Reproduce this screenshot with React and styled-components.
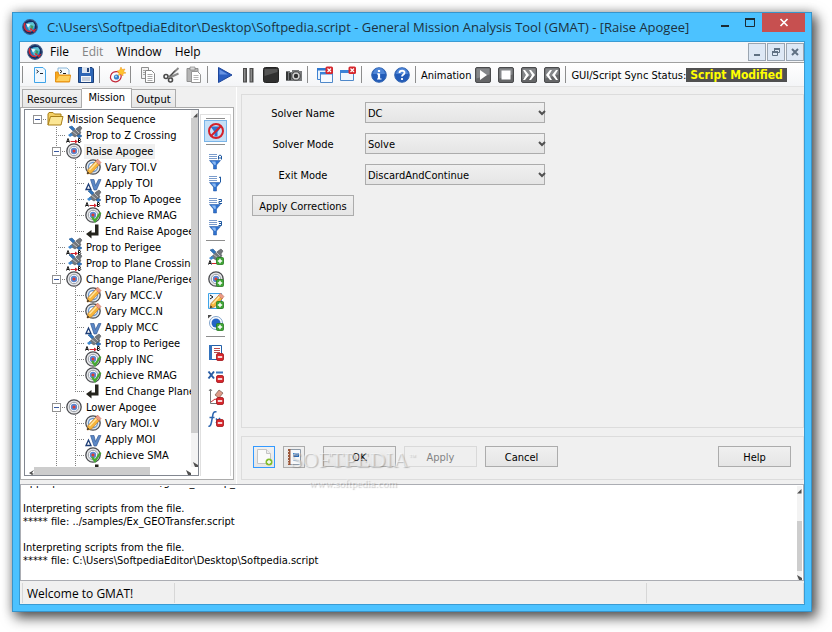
import { useEffect, useRef, useState } from 'react';
import styled, { createGlobalStyle, css } from 'styled-components';

const GlobalStyle = createGlobalStyle`
    * {
        box-sizing: border-box;
    }
    body {
        margin: 0;
        background: #ffffff;
    }
    button, select, textarea {
        font: inherit;
        color: inherit;
    }
`

const uiFont = css`
    font-family: "DejaVu Sans Condensed", "Noto Sans", sans-serif;
    font-size: 11px;
    line-height: 13px;
`

const shellFont = css`
    font-family: "Open Sans", "Noto Sans", sans-serif;
    font-size: 12px;
    line-height: 16px;
`

const Page = styled.div`
    ${uiFont}
    height: 100vh;
    min-height: 480px;
    padding: 12px 20px 20px 12px;
    color: #000000;
`

const Window = styled.div`
    display: flex;
    flex-direction: column;
    height: 100%;
    padding: 0 6px 6px;
    border: 1px solid #3794cb;
    background: #4cc2ff;
    box-shadow: 4px 5px 12px 1px rgba(0, 0, 0, 0.65), 0 0 10px rgba(0, 0, 0, 0.2);
`

const TitleBar = styled.header`
    display: flex;
    height: 28px;
    flex: none;
    padding-left: 3px;
    align-items: center;
    gap: 9px;
`

const Title = styled.h1`
    flex: 1;
    min-width: 0;
    margin: 0;
    overflow: hidden;
    white-space: nowrap;
    font-family: "Open Sans", "Noto Sans", sans-serif;
    font-size: 13px;
    font-weight: 400;
    line-height: 20px;
    color: #1c3140;
`

const Caption = styled.div`
    display: flex;
    align-self: flex-start;
`

const CaptionButton = styled.button`
    display: grid;
    place-items: center;
    width: ${props => props.$close ? "43px" : "25px"};
    height: 19px;
    padding: 0;
    border: none;
    background: ${props => props.$close ? "#c75050" : "transparent"};
`

const Client = styled.div`
    display: flex;
    flex: 1;
    flex-direction: column;
    min-height: 0;
    border: 1px solid #3a9bd3;
    background: #f0f0f0;
`

const MenuBar = styled.nav`
    ${shellFont}
    display: flex;
    flex: none;
    align-items: center;
    height: 20px;
    padding-left: 7px;
    background: #f5f6f8;
`

const MenuItem = styled.button`
    padding: 0 6px 0 7px;
    border: none;
    background: transparent;
    color: ${props => props.disabled ? "#838485" : "#000000"};
`

const MdiButtons = styled.div`
    display: flex;
    gap: 1px;
    margin-left: auto;
`

const MdiButton = styled.button`
    display: grid;
    place-items: center;
    width: 18px;
    height: 18px;
    padding: 0;
    border: 1px solid #9aa5b1;
    background: #dde8f5;
`

const Toolbar = styled.div`
    display: flex;
    flex: none;
    align-items: center;
    height: 25px;
    border-top: 1px solid #a0a0a0;
    border-bottom: 1px solid #e3e3e3;
    background: linear-gradient(#ffffff, #f4f5f7);
    white-space: nowrap;
`

const ToolSeparator = styled.span`
    flex: none;
    width: 8px;
    height: 17px;
    background: linear-gradient(#8d8d8d, #8d8d8d) 2px 0 / 1px 100% no-repeat;
`

const ToolButton = styled.button`
    display: grid;
    flex: none;
    place-items: center;
    width: 23px;
    height: 22px;
    padding: 0;
    border: none;
    background: transparent;
`

const ToolLabel = styled.span`
    padding-top: 2px;
`

const SyncStatus = styled.strong`
    padding: 0 4px;
    background: #505050;
    color: #ffff00;
    font-size: 12px;
    line-height: 14px;
`

const Workspace = styled.div`
    display: flex;
    flex: 1;
    min-height: 0;
`

const SidePane = styled.aside`
    display: flex;
    flex: none;
    flex-direction: column;
    width: 217px;
    padding: 1px 2px 4px 0;
    border-right: 1px solid #ffffff;
`

const TabList = styled.div`
    display: flex;
    align-items: flex-end;
    height: 19px;
    padding-left: 2px;
`

const Tab = styled.button`
    position: relative;
    height: ${props => props.$active ? "20px" : "18px"};
    margin-bottom: ${props => props.$active ? "-1px" : "0"};
    padding: ${props => props.$active ? "0 6px 2px" : "2px 4px 0"};
    border: 1px solid #acacac;
    border-left-width: ${props => props.$first ? "1px" : "0"};
    border-bottom: none;
    background: ${props => props.$active ? "#ffffff" : "linear-gradient(#f1f1f1, #e6e6e6)"};
`

const TabPage = styled.div`
    display: flex;
    flex: 1;
    min-height: 0;
    padding: 1px 0 3px 3px;
    border: 1px solid #acacac;
    background: #ffffff;
`

const TreeFrame = styled.div`
    display: grid;
    flex: 1;
    grid-template: minmax(0, 1fr) 8px / minmax(0, 1fr) 7px;
    border: 1px solid #828790;
`

const TreeList = styled.ul`
    margin: 0;
    padding: 1px 0 0 3px;
    overflow: hidden;
    list-style: none;
`

const TreeRow = styled.li`
    display: flex;
    height: 16px;
    align-items: center;
    white-space: nowrap;
`

const dots = "repeating-linear-gradient(#808080 0 1px, transparent 1px 2px)";
const dotsAcross = "repeating-linear-gradient(90deg, #808080 0 1px, transparent 1px 2px)";

const guideShapes = {
    blank: "none",
    line: `${dots} 9px 0 / 1px 16px no-repeat`,
    tee: `${dots} 9px 0 / 1px 16px no-repeat, ${dotsAcross} 9px 8px / 10px 1px no-repeat`,
    end: `${dots} 9px 0 / 1px 9px no-repeat, ${dotsAcross} 9px 8px / 10px 1px no-repeat`,
    root: `${dotsAcross} 9px 8px / 10px 1px no-repeat`,
};

const Guide = styled.span`
    display: grid;
    flex: none;
    place-items: center;
    width: 19px;
    height: 16px;
    background: ${props => guideShapes[props.$shape]};
`

const Expander = styled.button`
    display: grid;
    place-items: center;
    width: 9px;
    height: 9px;
    padding: 0;
    border: 1px solid #919191;
    background: #ffffff;
`

const TreeText = styled.span`
    margin-left: 2px;
    padding: 1px 2px;
    background: ${props => props.$selected ? "#f0f0f0" : "transparent"};
`

const Scrollbar = styled.div`
    display: flex;
    flex-direction: ${props => props.$across ? "row" : "column"};
    justify-content: space-between;
    align-items: flex-end;
    padding: ${props => props.$across ? "0 0 0 4px" : "3px 0 0"};
    background: ${props => props.$across ? "#ffffff" : "#f3f3f3"};
`

const Thumb = styled.span`
    flex: none;
    align-self: stretch;
    ${props => props.$across ? "width" : "height"}: ${props => props.$size};
    ${props => props.$across ? "margin-right" : "margin-bottom"}: auto;
    ${props => props.$push && "margin-top: auto; margin-bottom: 4px;"}
    background: #cdcdcd;
`

const FilterStrip = styled.div`
    display: flex;
    flex: none;
    flex-direction: column;
    align-items: center;
    width: 31px;
    margin: 5px 2px 0 1px;
    padding-top: 3px;
    border: 1px solid #e0e0e0;
    border-bottom: none;
`

const StripLine = styled.span`
    flex: none;
    width: 19px;
    height: 1px;
    margin: ${props => props.$tight ? "0 0 1px" : "2px 0 5px"};
    background: #8d8d8d;
`

const StripButton = styled.button`
    display: grid;
    flex: none;
    place-items: center;
    width: 23px;
    height: 22px;
    padding: 0;
    border: ${props => props.$pressed ? "1px solid #7ab5e8" : "none"};
    background: ${props => props.$pressed ? "#c5e0f7" : "transparent"};
`

const Detail = styled.main`
    position: relative;
    display: flex;
    flex: 1;
    flex-direction: column;
    gap: 8px;
    min-width: 0;
    padding: 7px 0 4px 4px;
`

const SolverPanel = styled.section`
    display: grid;
    flex: 1;
    grid-template-columns: 102px 180px;
    grid-auto-rows: 21px;
    gap: 10px 11px;
    padding: 7px 10px;
    border: 1px solid #dcdcdc;
`

const FieldLabel = styled.label`
    align-self: center;
    padding-top: 2px;
    text-align: center;
`

const SelectBox = styled.div`
    display: grid;
    align-items: center;

    > * {
        grid-area: 1 / 1;
    }
    > svg {
        justify-self: end;
        pointer-events: none;
    }
`

const Select = styled.select`
    width: 100%;
    height: 21px;
    padding: 2px 2px 0;
    border: 1px solid #acacac;
    border-radius: 0;
    background: linear-gradient(#f0f0f0, #e5e5e5);
    appearance: none;
`

const PushButton = styled.button`
    display: grid;
    place-items: center;
    width: ${props => props.$square ? "22px" : props.$fill ? "100%" : "73px"};
    height: ${props => props.$square ? "22px" : "21px"};
    padding: ${props => props.$square ? "0" : "2px 0 0"};
    border: 1px solid ${props => props.$focused ? "#3399ff" : props.disabled ? "#d9d9d9" : "#acacac"};
    background: ${props => props.disabled ? "#efefef" : "linear-gradient(#f0f0f0, #e5e5e5)"};
    color: ${props => props.disabled ? "#838383" : "#000000"};
`

const Actions = styled.footer`
    display: flex;
    flex: none;
    gap: 8px;
    height: 44px;
    padding: 9px 12px 9px 11px;
    border: 1px solid #dcdcdc;
`

const Push = styled.span`
    width: ${props => props.$wide ? "auto" : "2px"};
    flex: ${props => props.$wide ? "1" : "none"};
`

const Watermark = styled.div`
    position: absolute;
    left: 53px;
    bottom: -9px;
    width: 126px;
    text-align: center;
    color: rgba(255, 255, 255, 0.5);
    text-shadow: 1px 1px 1px rgba(100, 100, 100, 0.4);
    font-family: "Liberation Serif", serif;
    font-size: 22px;
    line-height: 26px;
    white-space: nowrap;
    pointer-events: none;

    sup {
        font-size: 7px;
        line-height: 0;
    }
    small {
        display: block;
        font-size: 11px;
        line-height: 20px;
    }
`

const Messages = styled.section`
    display: flex;
    flex: none;
    height: 97px;
    padding: 1px 1px 0;
    border: 1px solid #abadb3;
    background: #ffffff;
`

const MessageText = styled.textarea`
    flex: 1;
    height: 94px;
    padding: 0 1px;
    border: none;
    outline: none;
    resize: none;
    overflow: hidden;
    background: transparent;
`

const StatusBar = styled.footer`
    ${shellFont}
    display: flex;
    flex: none;
    height: 23px;
    padding: 2px 0 1px 2px;
`

const StatusCell = styled.span`
    flex: ${props => props.$size};
    padding: 3px 4px 1px;
    border-right: 1px solid #d7d7d7;
    border-left: ${props => props.$first ? "1px solid #d7d7d7" : "none"};
`

const Svg = styled.svg`
    display: block;
    flex: none;
    overflow: visible;
`

const target = (
    <>
        <circle cx="8" cy="8" r="7.2" fill="#e6e7ea" stroke="#4b4c50" strokeWidth="1.3" />
        <circle cx="8" cy="8" r="4.7" fill="#fff" stroke="#9a9ea4" strokeWidth="1" />
        <circle cx="8" cy="8" r="3.2" fill="#5b86cf" />
        <circle cx="8" cy="8" r="1.5" fill="#e13a33" />
    </>
)

const craft = (
    <>
        <path d="M2 1l3-1 3 3-2 2zM9 9l2-2 4 3-3 2z" fill="#2f74bd" stroke="#1b4c84" strokeWidth=".5" />
        <path d="M3 8l7-6 3-2 2 2-2 3 1 2-6 4z" fill="#73777c" stroke="#47494c" strokeWidth=".5" />
        <path d="M5 5l5 4M8 3l4 4" stroke="#b9bdc2" />
        <path d="M1 9l3-2 2 2-3 2z" fill="#3b86cf" />
    </>
)

const plus = (
    <>
        <rect x="8.5" y="8.5" width="7" height="7" rx="1" fill="#3fa535" stroke="#26781f" strokeWidth=".8" />
        <path d="M12 9.8v4.4M9.8 12h4.4" stroke="#fff" strokeWidth="1.4" />
    </>
)

const minus = (
    <>
        <rect x="8.5" y="8.5" width="7" height="7" rx="1.5" fill="#d8262c" stroke="#a01318" strokeWidth=".8" />
        <path d="M9.8 12h4.4" stroke="#fff" strokeWidth="1.6" />
    </>
)

const pencil = (
    <>
        <path d="M2 15l1-4.500 8-8.500 3.500 3.500-8 8.500z" fill="#f7b63c" stroke="#b8762a" strokeWidth=".7" />
        <path d="M10.500 2.500L14 6l2-2.500L12.500 0z" fill="#eb9a86" stroke="#b8664f" strokeWidth=".5" />
        <path d="M2 15l.7-2.500 1.800 1.800z" fill="#222" />
        <path d="M4.500 11l7-7.500" stroke="#ffe7a8" strokeWidth="1.300" />
    </>
)

const filter = (
    <>
        <path d="M1 1.500h8M1 3.500h8M1 5.500h8" stroke="#7b9ccc" />
        <path d="M1.500 7.500h11l-4 4.500v4h-3v-4z" fill="#2f72cf" stroke="#184f9f" strokeWidth=".5" />
        <path d="M3.500 8.500h4l.5 3-1.500.5z" fill="#8dbaf2" />
    </>
)

const closeBadge = (
    <>
        <rect x="8.500" y="-.5" width="7.500" height="7.500" rx="1.500" fill="#d5272d" />
        <path d="M10.500 1.500L14 5M14 1.500L10.500 5" stroke="#fff" strokeWidth="1.200" />
    </>
)

const darkTile = (
    <>
        <rect x=".5" y=".5" width="15" height="15" rx="1.500" fill="#656668" stroke="#4a4b4d" />
        <path d="M1.500 1.500h13v6l-13 4z" fill="#85878a" />
    </>
)

const drawings = {
    gmat: <>
        <circle cx="8" cy="8" r="7.300" fill="#122a5c" stroke="#3f5a86" strokeWidth="1.200" />
        <circle cx="8" cy="8" r="5" fill="#267fc0" />
        <path d="M6 4l5-1 2 3-3 6-3-1-2-4z" fill="#5fc4d2" />
        <path d="M4 4.500l4.500 1L6 8.500z" fill="#eef7f9" />
        <path d="M8.500 6l3 1-1 3.500-2-1z" fill="#3c9a66" />
        <path d="M3 4C1 9 4 13 9 12.500M8 9.500l4 3 1.500-2.500" fill="none" stroke="#dd2632" strokeWidth="1.400" />
    </>,
    folder: <>
        <path d="M1 14V3l1-1.500h4L7.500 3H14v3" fill="#f3cf64" stroke="#a87e17" />
        <path d="M1 14L3.500 5.500H16L14 14z" fill="#fbe694" stroke="#a87e17" />
    </>,
    prop: <>
        <g transform="translate(1 -1)">{craft}</g>
        <path d="M.5 15.500l1.500-4 1.500 4M1 14.500h2M12.500 11.500v4h1.500q1.500-1 0-2h-1.500M12.500 11.500H14q1 1 0 2" fill="none" stroke="#111" />
        <path d="M4.500 14.500h6" stroke="#d4212b" />
        <path d="M9 12.500l3 2-3 2z" fill="#d4212b" />
    </>,
    target,
    vary: <>
        <circle cx="8" cy="8" r="7.200" fill="#e2e8ee" stroke="#4b4c50" strokeWidth="1.300" />
        <circle cx="8" cy="8" r="4.500" fill="#fff" stroke="#6d97c8" strokeWidth="1.300" />
        {pencil}
    </>,
    apply: <>
        <path d="M1 14.500L3.500 9 6 14.500z" fill="#fff" stroke="#1d3d76" strokeWidth="1.300" />
        <path d="M5.500 4.500h3.500l1.500 6 3-6H16L11.500 15H9z" fill="#5b87c5" stroke="#284f8d" strokeWidth=".6" />
    </>,
    achieve: <>
        {target}
        <path d="M7 10l3 4L15.500 5.500" fill="none" stroke="#45a933" strokeWidth="2.300" />
    </>,
    end: <path d="M10 1.500h3.500V12.500H6.500v3L1 11l5.500-4v2.500H10z" fill="#24231c" />,
    newScript: <>
        <path d="M2.500 .5h8.500l2.500 2.500v12.500h-11z" fill="#eff8ff" stroke="#3fa4e8" />
        <path d="M4.500 3l2 1.500-2 1.500M8 6.500h3" fill="none" stroke="#1d2530" />
    </>,
    openScript: <>
        <path d="M3 1h9l2 2v6H3z" fill="#f4fbff" stroke="#8ab6d8" />
        <path d="M5 3l2 1.500L5 6M8 6.500h3" fill="none" stroke="#222" />
        <path d="M.5 15V5H3l1 3h11.500l-1 7z" fill="#f7a81d" stroke="#e3921a" />
        <path d="M1 14l3-5h11l-1 5z" fill="#ffd05e" />
    </>,
    save: <>
        <path d="M.5.5h13.500l1.500 1.500v13.500H.5z" fill="#2e66b5" stroke="#1b3f78" />
        <path d="M4 0h8v6H4z" fill="#dce5f0" /><path d="M9 1h2v4H9z" fill="#23447a" />
        <path d="M3 9h10v6H3z" fill="#f5f7fa" /><path d="M4 11h8M4 13h8" stroke="#97a6bb" />
    </>,
    run: <>
        <ellipse cx="6.500" cy="9.500" rx="5.500" ry="5" fill="none" stroke="#c32536" strokeWidth="1.200" transform="rotate(-30 7 9)" />
        <circle cx="7.500" cy="10" r="2.600" fill="#357fc9" /><circle cx="7" cy="9.500" r="1.100" fill="#9ed3ee" />
        <path d="M12 0l1 2.500L16 2l-1.500 2.500L17 6l-3 .5L14 9l-2-2-2.500 1.500L10 6 8 4l2.500-.5z" fill="#ffc22e" stroke="#ef9415" strokeWidth=".5" />
    </>,
    copy: <>
        <path d="M1.500.5h7v11h-7z" fill="#f3f3f3" stroke="#8f8f8f" />
        <path d="M5.500 3.500h6l3 3v9h-9z" fill="#fff" stroke="#858585" />
        <path d="M7.500 7.500h5M7.500 9.500h5M7.500 11.500h5M7.500 13.500h5M3 3.500h2M3 5.500h2M3 7.500h2" stroke="#a8a8a8" />
    </>,
    cut: <>
        <path d="M15.500 1L6 10M8 10l7.500-3.500" stroke="#8a8a8a" strokeWidth="2" />
        <path d="M12 3.500L7 9.500" stroke="#3d3d3d" />
        <circle cx="3" cy="9.500" r="2" fill="none" stroke="#4a4a4a" strokeWidth="1.600" />
        <circle cx="7.500" cy="13" r="2" fill="none" stroke="#4a4a4a" strokeWidth="1.600" />
    </>,
    paste: <>
        <path d="M1 1.500h11v13H1z" fill="#b4b4b4" stroke="#8f8f8f" />
        <path d="M4 0h5v3H4z" fill="#d9d9d9" stroke="#777" strokeWidth=".6" />
        <path d="M5.500 4.500h6l3 3v8h-9z" fill="#fff" stroke="#959595" />
        <path d="M7.500 8.500h5M7.500 10.500h5M7.500 12.500h5" stroke="#b5b5b5" />
    </>,
    play: <><path d="M1.500.5l13.500 7.500-13.500 7.500z" fill="#2b5ec0" stroke="#1d469b" /><path d="M2.500 2.500L11 7.500H2.500z" fill="#6793e3" /></>,
    pause: <><path d="M3 1h4v14.500H3zM9.500 1h4v14.500h-4z" fill="#4b4b4b" /><path d="M4 2h1.500v12.500H4zM10.500 2H12v12.500h-1.500z" fill="#8c8c8c" /></>,
    stop: <><rect x=".5" y=".5" width="15" height="15" rx="2" fill="#303030" stroke="#222" /><path d="M1.500 2h13v3l-13 4z" fill="#555" /></>,
    camera: <>
        <path d="M0 4h4v1h2V3h7v1h3v10H0z" fill="#77797b" />
        <path d="M1 5v8M4 6v7" stroke="#202020" strokeWidth="1.500" />
        <circle cx="10" cy="9" r="4.200" fill="#d5d5d5" stroke="#414141" /><circle cx="10" cy="9" r="2.200" fill="#333" />
    </>,
    closeAll: <>
        <path d="M.5 1.500h10v11H.5z" fill="#e8f2fc" stroke="#3e82d2" /><path d="M0 1h11v2.500H0z" fill="#2f78d1" />
        <path d="M3.500 5.500h12v10h-12z" fill="#f5faff" stroke="#4f88c9" /><path d="M3 5h13v2.500H3z" fill="#3b83d8" />
        {closeBadge}
    </>,
    closeOne: <>
        <path d="M.5 3.500h13v10H.5z" fill="#eff6fd" stroke="#4f88c9" /><path d="M0 3h14v3H0z" fill="#3b83d8" />
        {closeBadge}
    </>,
    info: <>
        <circle cx="8" cy="8" r="7.300" fill="#225bb8" stroke="#3467b3" /><path d="M2 7a6 6 0 0 1 12 0z" fill="#4e85d7" />
        <path d="M8 3v2M8 6.500v5.500" fill="none" stroke="#fff" strokeWidth="2.200" /><path d="M6 7h2M6 12h4.500" stroke="#fff" />
    </>,
    help: <>
        <circle cx="8" cy="8" r="7.300" fill="#225bb8" stroke="#3467b3" /><path d="M2 7a6 6 0 0 1 12 0z" fill="#4e85d7" />
        <path d="M5.500 6c0-3 5.500-3 5 0 0 1.500-2.500 1.500-2.500 3.500M8 11v2" fill="none" stroke="#fff" strokeWidth="1.800" />
    </>,
    animPlay: <>{darkTile}<path d="M5 3l7 5-7 5z" fill="#fff" /></>,
    animStop: <>{darkTile}<rect x="3.500" y="3.500" width="9" height="9" fill="#fff" /></>,
    animFast: <>{darkTile}<path d="M2 3h2l4 5-4 5H2l3-5zM8 3h2l4 5-4 5H8l3-5z" fill="#fff" /></>,
    animBack: <>{darkTile}<path d="M8 3H6L2 8l4 5h2L5 8zM14 3h-2L8 8l4 5h2l-3-5z" fill="#fff" /></>,
    noFilter: <>
        <path d="M2.500 3.500h11L9.500 9v4.500h-3V9z" fill="#3272d0" />
        <circle cx="8" cy="8" r="7" fill="none" stroke="#d3212b" strokeWidth="2" /><path d="M3 13L13 3" stroke="#d3212b" strokeWidth="2" />
    </>,
    filterA: <>{filter}<path d="M10.500 6.500V3q1.500-2 3 0v3.500M10.500 5h3" fill="none" stroke="#1d579f" /></>,
    filter1: <>{filter}<path d="M11 2.500l1.500-.5v5" fill="none" stroke="#1d579f" /></>,
    filter2: <>{filter}<path d="M10.500 2.500h3v2h-2.500v2h3" fill="none" stroke="#1d579f" /></>,
    filter3: <>{filter}<path d="M10.500 2.500h3v4h-3M11 4.500h2" fill="none" stroke="#1d579f" /></>,
    addProp: <>{craft}<path d="M.5 15.500l1.500-4 1.500 4M1 14.500h2" fill="none" stroke="#111" /><path d="M4 14.500h5" stroke="#d4212b" />{plus}</>,
    addTarget: <>{target}{plus}</>,
    addScript: <><path d="M.5.5h13v15H.5z" fill="#eff8ff" stroke="#3fa4e8" /><path d="M2 2l3 2-3 2" fill="none" stroke="#111" />{pencil}{plus}</>,
    addOrbit: <>
        <circle cx="8" cy="8" r="6.500" fill="none" stroke="#7fa3cc" /><circle cx="8" cy="8" r="4.500" fill="#2465c5" />
        <path d="M0 3.500V0h4z" fill="#4c4c4c" />{plus}
    </>,
    report: <>
        <path d="M1.500.5h12v14h-12z" fill="#fff" stroke="#2560a8" /><path d="M1 0h3v15H1z" fill="#3272bd" />
        <path d="M6 3.500h6M6 5.500h6M6 7.500h6" stroke="#bb4b4d" />{minus}
    </>,
    equation: <><path d="M.5 4.500l5.500 7M6 4.500L.5 11.500" stroke="#295ca4" strokeWidth="2" /><path d="M8 5.500h7" stroke="#3b76bd" strokeWidth="2" />{minus}</>,
    plot: <>
        <path d="M2.500 0v14.500H9M1 2l1.500-2L4 2" fill="none" stroke="#777" /><path d="M3 13l4-3 2 1" fill="none" stroke="#cc2c33" />
        <path d="M7 6l4-5 4 3-4 5z" fill="#de9b88" stroke="#77594e" strokeWidth=".7" />{minus}
    </>,
    func: <><path d="M.5 15q2 1 3-4l1.500-8Q6 0 8.500 1M1.500 6.500h5M8 7.500l3 4M12 7l-4 5" fill="none" stroke="#2c65af" strokeWidth="1.500" />{minus}</>,
    addPage: <>
        <path d="M1.500.5h9l4 4v10h-13z" fill="#fafafa" stroke="#c4c4c4" /><path d="M10.500.5v4h4" fill="#eee" stroke="#c4c4c4" />
        <circle cx="13" cy="13" r="3.500" fill="#82bd2d" /><path d="M13 11v4M11 13h4" stroke="#fff" strokeWidth="1.300" />
    </>,
    notebook: <>
        <path d="M2.500.5h12v15h-12z" fill="#f6f8fb" stroke="#8e9aa7" /><path d="M2 0h2.500v16H2z" fill="#9b5639" />
        <path d="M1 2.500h2M1 5.500h2M1 8.500h2M1 11.500h2M1 14h2" stroke="#e7ddd7" />
        <path d="M7 4h6v4H7z" fill="#2b69b3" /><path d="M8 6h4M7 11.500h6" stroke="#b9cfe8" />
    </>,
};

const Icon = ({ name, size = 16 }) => (
    <Svg width={size} height={size} viewBox="0 0 16 16" aria-hidden="true">{drawings[name]}</Svg>
)

const Arrow = ({ corner }) => (
    <Svg width="5" height="5" viewBox="0 0 5 5" aria-hidden="true">
        <path d={corner === "up" ? "M0 4.500L4.500 0v4.500z" : corner === "left" ? "M5 0L0 3l3 2 2-1-2-1z" : "M0 0l5 3v2H2z"} fill="#505050" />
    </Svg>
)

const toolGroups = [
    [["newScript", "New Script"], ["openScript", "Open"], ["save", "Save"]],
    [["run", "New Mission"]],
    [["copy", "Copy"], ["cut", "Cut"], ["paste", "Paste"]],
    [["play", "Run"], ["pause", "Pause"], ["stop", "Stop"], ["camera", "Screenshot"]],
    [["closeAll", "Close All"], ["closeOne", "Close"]],
    [["info", "About"], ["help", "Help"]],
];

const animationTools = [
    ["animPlay", "Start Animation"],
    ["animStop", "Stop Animation"],
    ["animFast", "Faster Animation"],
    ["animBack", "Slower Animation"],
];

// [guides, icon, text, is expandable]
const treeRows = [
    [["root"], "folder", "Mission Sequence", true],
    [["blank", "tee"], "prop", "Prop to Z Crossing"],
    [["blank", "tee"], "target", "Raise Apogee", true],
    [["blank", "line", "tee"], "vary", "Vary TOI.V"],
    [["blank", "line", "tee"], "apply", "Apply TOI"],
    [["blank", "line", "tee"], "prop", "Prop To Apogee"],
    [["blank", "line", "tee"], "achieve", "Achieve RMAG"],
    [["blank", "line", "end"], "end", "End Raise Apogee"],
    [["blank", "tee"], "prop", "Prop to Perigee"],
    [["blank", "tee"], "prop", "Prop to Plane Crossing"],
    [["blank", "tee"], "target", "Change Plane/Perigee", true],
    [["blank", "line", "tee"], "vary", "Vary MCC.V"],
    [["blank", "line", "tee"], "vary", "Vary MCC.N"],
    [["blank", "line", "tee"], "apply", "Apply MCC"],
    [["blank", "line", "tee"], "prop", "Prop to Perigee"],
    [["blank", "line", "tee"], "achieve", "Apply INC"],
    [["blank", "line", "tee"], "achieve", "Achieve RMAG"],
    [["blank", "line", "end"], "end", "End Change Plane"],
    [["blank", "tee"], "target", "Lower Apogee", true],
    [["blank", "line", "tee"], "vary", "Vary MOI.V"],
    [["blank", "line", "tee"], "apply", "Apply MOI"],
    [["blank", "line", "tee"], "achieve", "Achieve SMA"],
    [["blank", "line", "end"], "end", "End Lower Apogee"],
];

const stripGroups = [
    [["filterA", "Show All"], ["filter1", "Level 1"], ["filter2", "Level 2"], ["filter3", "Level 3"]],
    [["addProp", "Add Propagate"], ["addTarget", "Add Target"], ["addScript", "Add Script"], ["addOrbit", "Add Orbit"]],
    [["report", "Remove Report"], ["equation", "Remove Equation"], ["plot", "Remove Plot"], ["func", "Remove Function"]],
];

const fields = [
    ["solverName", "Solver Name", ["DC"]],
    ["solverMode", "Solver Mode", ["Solve", "RunInitialGuess"]],
    ["exitMode", "Exit Mode", ["DiscardAndContinue", "SaveAndContinue", "Stop"]],
];

const log = `Appropriate data in folder ../gmat_startup_

Interpreting scripts from the file.
***** file: ../samples/Ex_GEOTransfer.script

Interpreting scripts from the file.
***** file: C:\\Users\\SoftpediaEditor\\Desktop\\Softpedia.script
`;

function MissionTree () {
    const [selected, setSelected] = useState(2);

    return (
        <TreeFrame>
            <TreeList>
                {treeRows.map(([guides, icon, text, expandable], row) => (
                    <TreeRow key={row} onClick={() => setSelected(row)}>
                        {guides.map((shape, i) => (
                            <Guide key={i} $shape={shape}>
                                {expandable && i === guides.length - 1 &&
                                    <Expander aria-label={`Collapse ${text}`}>
                                        <Svg width="5" height="1"><rect width="5" height="1" fill="#3b5aa0" /></Svg>
                                    </Expander>}
                            </Guide>
                        ))}
                        <Icon name={icon} />
                        <TreeText $selected={row === selected}>{text}</TreeText>
                    </TreeRow>
                ))}
            </TreeList>
            <Scrollbar>
                <Arrow corner="up" />
                <Thumb $size="89%" />
                <Arrow corner="down" />
            </Scrollbar>
            <Scrollbar $across>
                <Arrow corner="left" />
                <Thumb $across $size="116px" />
                <Arrow corner="down" />
            </Scrollbar>
        </TreeFrame>
    )
}

function App () {
    const messages = useRef(null);

    useEffect(() => {
        messages.current.scrollTop = messages.current.scrollHeight;
    }, []);

    return (
    <Page>
        <GlobalStyle />
        <Window>
            <TitleBar>
                <Icon name="gmat" />
                <Title>C:\Users\SoftpediaEditor\Desktop\Softpedia.script - General Mission Analysis Tool (GMAT) - [Raise Apogee]</Title>
                <Caption>
                    <CaptionButton aria-label="Minimize">
                        <Svg width="8" height="10"><path d="M0 7h8v2H0z" fill="#1b2a33" /></Svg>
                    </CaptionButton>
                    <CaptionButton aria-label="Maximize">
                        <Svg width="10" height="9"><path d="M.5 1h9v7.500h-9z" fill="none" stroke="#1b2a33" /><path d="M0 0h10v2H0z" fill="#1b2a33" /></Svg>
                    </CaptionButton>
                    <CaptionButton $close aria-label="Close">
                        <Svg width="8" height="7"><path d="M.5 0l7 7M7.500 0l-7 7" stroke="#fff" strokeWidth="1.700" /></Svg>
                    </CaptionButton>
                </Caption>
            </TitleBar>
            <Client>
                <MenuBar>
                    <Icon name="gmat" />
                    <MenuItem>File</MenuItem>
                    <MenuItem disabled>Edit</MenuItem>
                    <MenuItem>Window</MenuItem>
                    <MenuItem>Help</MenuItem>
                    <MdiButtons>
                        <MdiButton aria-label="Minimize document">
                            <Svg width="8" height="8"><path d="M1 6h6v2H1z" fill="#5f7183" /></Svg>
                        </MdiButton>
                        <MdiButton aria-label="Restore document">
                            <Svg width="8" height="8"><path d="M2.500 3V.5h5v4H6M.5 3.500h5v4h-5z" fill="none" stroke="#5f7183" /><path d="M2 1h6M0 4h6" stroke="#5f7183" strokeWidth="2" /></Svg>
                        </MdiButton>
                        <MdiButton aria-label="Close document">
                            <Svg width="8" height="8"><path d="M1 1l6 6M7 1L1 7" stroke="#5f7183" strokeWidth="2" /></Svg>
                        </MdiButton>
                    </MdiButtons>
                </MenuBar>
                <Toolbar>
                    {toolGroups.map((group) => [
                        <ToolSeparator key={group[0][0] + "Line"} />,
                        ...group.map(([name, label]) => (
                            <ToolButton key={name} aria-label={label}><Icon name={name} /></ToolButton>
                        )),
                    ])}
                    <ToolSeparator />
                    <ToolLabel>Animation</ToolLabel>
                    {animationTools.map(([name, label]) => (
                        <ToolButton key={name} aria-label={label}><Icon name={name} /></ToolButton>
                    ))}
                    <ToolSeparator />
                    <ToolLabel>GUI/Script Sync Status:</ToolLabel>
                    <SyncStatus>Script Modified</SyncStatus>
                </Toolbar>
                <Workspace>
                    <SidePane>
                        <TabList role="tablist">
                            <Tab role="tab" $first>Resources</Tab>
                            <Tab role="tab" $active aria-selected="true">Mission</Tab>
                            <Tab role="tab">Output</Tab>
                        </TabList>
                        <TabPage>
                            <MissionTree />
                            <FilterStrip>
                                <StripLine $tight />
                                <StripButton $pressed aria-label="No filter"><Icon name="noFilter" /></StripButton>
                                {stripGroups.map((group) => [
                                    <StripLine key={group[0][0] + "Line"} />,
                                    ...group.map(([name, label]) => (
                                        <StripButton key={name} aria-label={label}><Icon name={name} /></StripButton>
                                    )),
                                ])}
                            </FilterStrip>
                        </TabPage>
                    </SidePane>
                    <Detail>
                        <SolverPanel>
                            {fields.map(([id, label, options]) => [
                                <FieldLabel key={id + "Label"} htmlFor={id}>{label}</FieldLabel>,
                                <SelectBox key={id}>
                                    <Select id={id}>
                                        {options.map((option) => <option key={option}>{option}</option>)}
                                    </Select>
                                    <Svg width="7" height="6"><path d="M1 1l3 3 3-3" fill="none" stroke="#505050" strokeWidth="2" /></Svg>
                                </SelectBox>,
                            ])}
                            <PushButton $fill>Apply Corrections</PushButton>
                        </SolverPanel>
                        <Actions>
                            <PushButton $square $focused aria-label="Show script"><Icon name="addPage" /></PushButton>
                            <PushButton $square aria-label="Command summary"><Icon name="notebook" /></PushButton>
                            <Push />
                            <PushButton>OK</PushButton>
                            <PushButton disabled>Apply</PushButton>
                            <PushButton>Cancel</PushButton>
                            <Push $wide />
                            <PushButton>Help</PushButton>
                        </Actions>
                        <Watermark>SOFTPEDIA<sup>™</sup><small>www.softpedia.com</small></Watermark>
                    </Detail>
                </Workspace>
                <Messages>
                    <MessageText ref={messages} readOnly aria-label="Messages" value={log} />
                    <Scrollbar>
                        <Arrow corner="up" />
                        <Thumb $size="50px" $push />
                        <Arrow corner="down" />
                    </Scrollbar>
                </Messages>
                <StatusBar>
                    <StatusCell $first $size="0 0 153px">Welcome to GMAT!</StatusCell>
                    <StatusCell $size="1" />
                    <StatusCell $size="0 0 157px" />
                </StatusBar>
            </Client>
        </Window>
    </Page>
    )
}
export default App;
